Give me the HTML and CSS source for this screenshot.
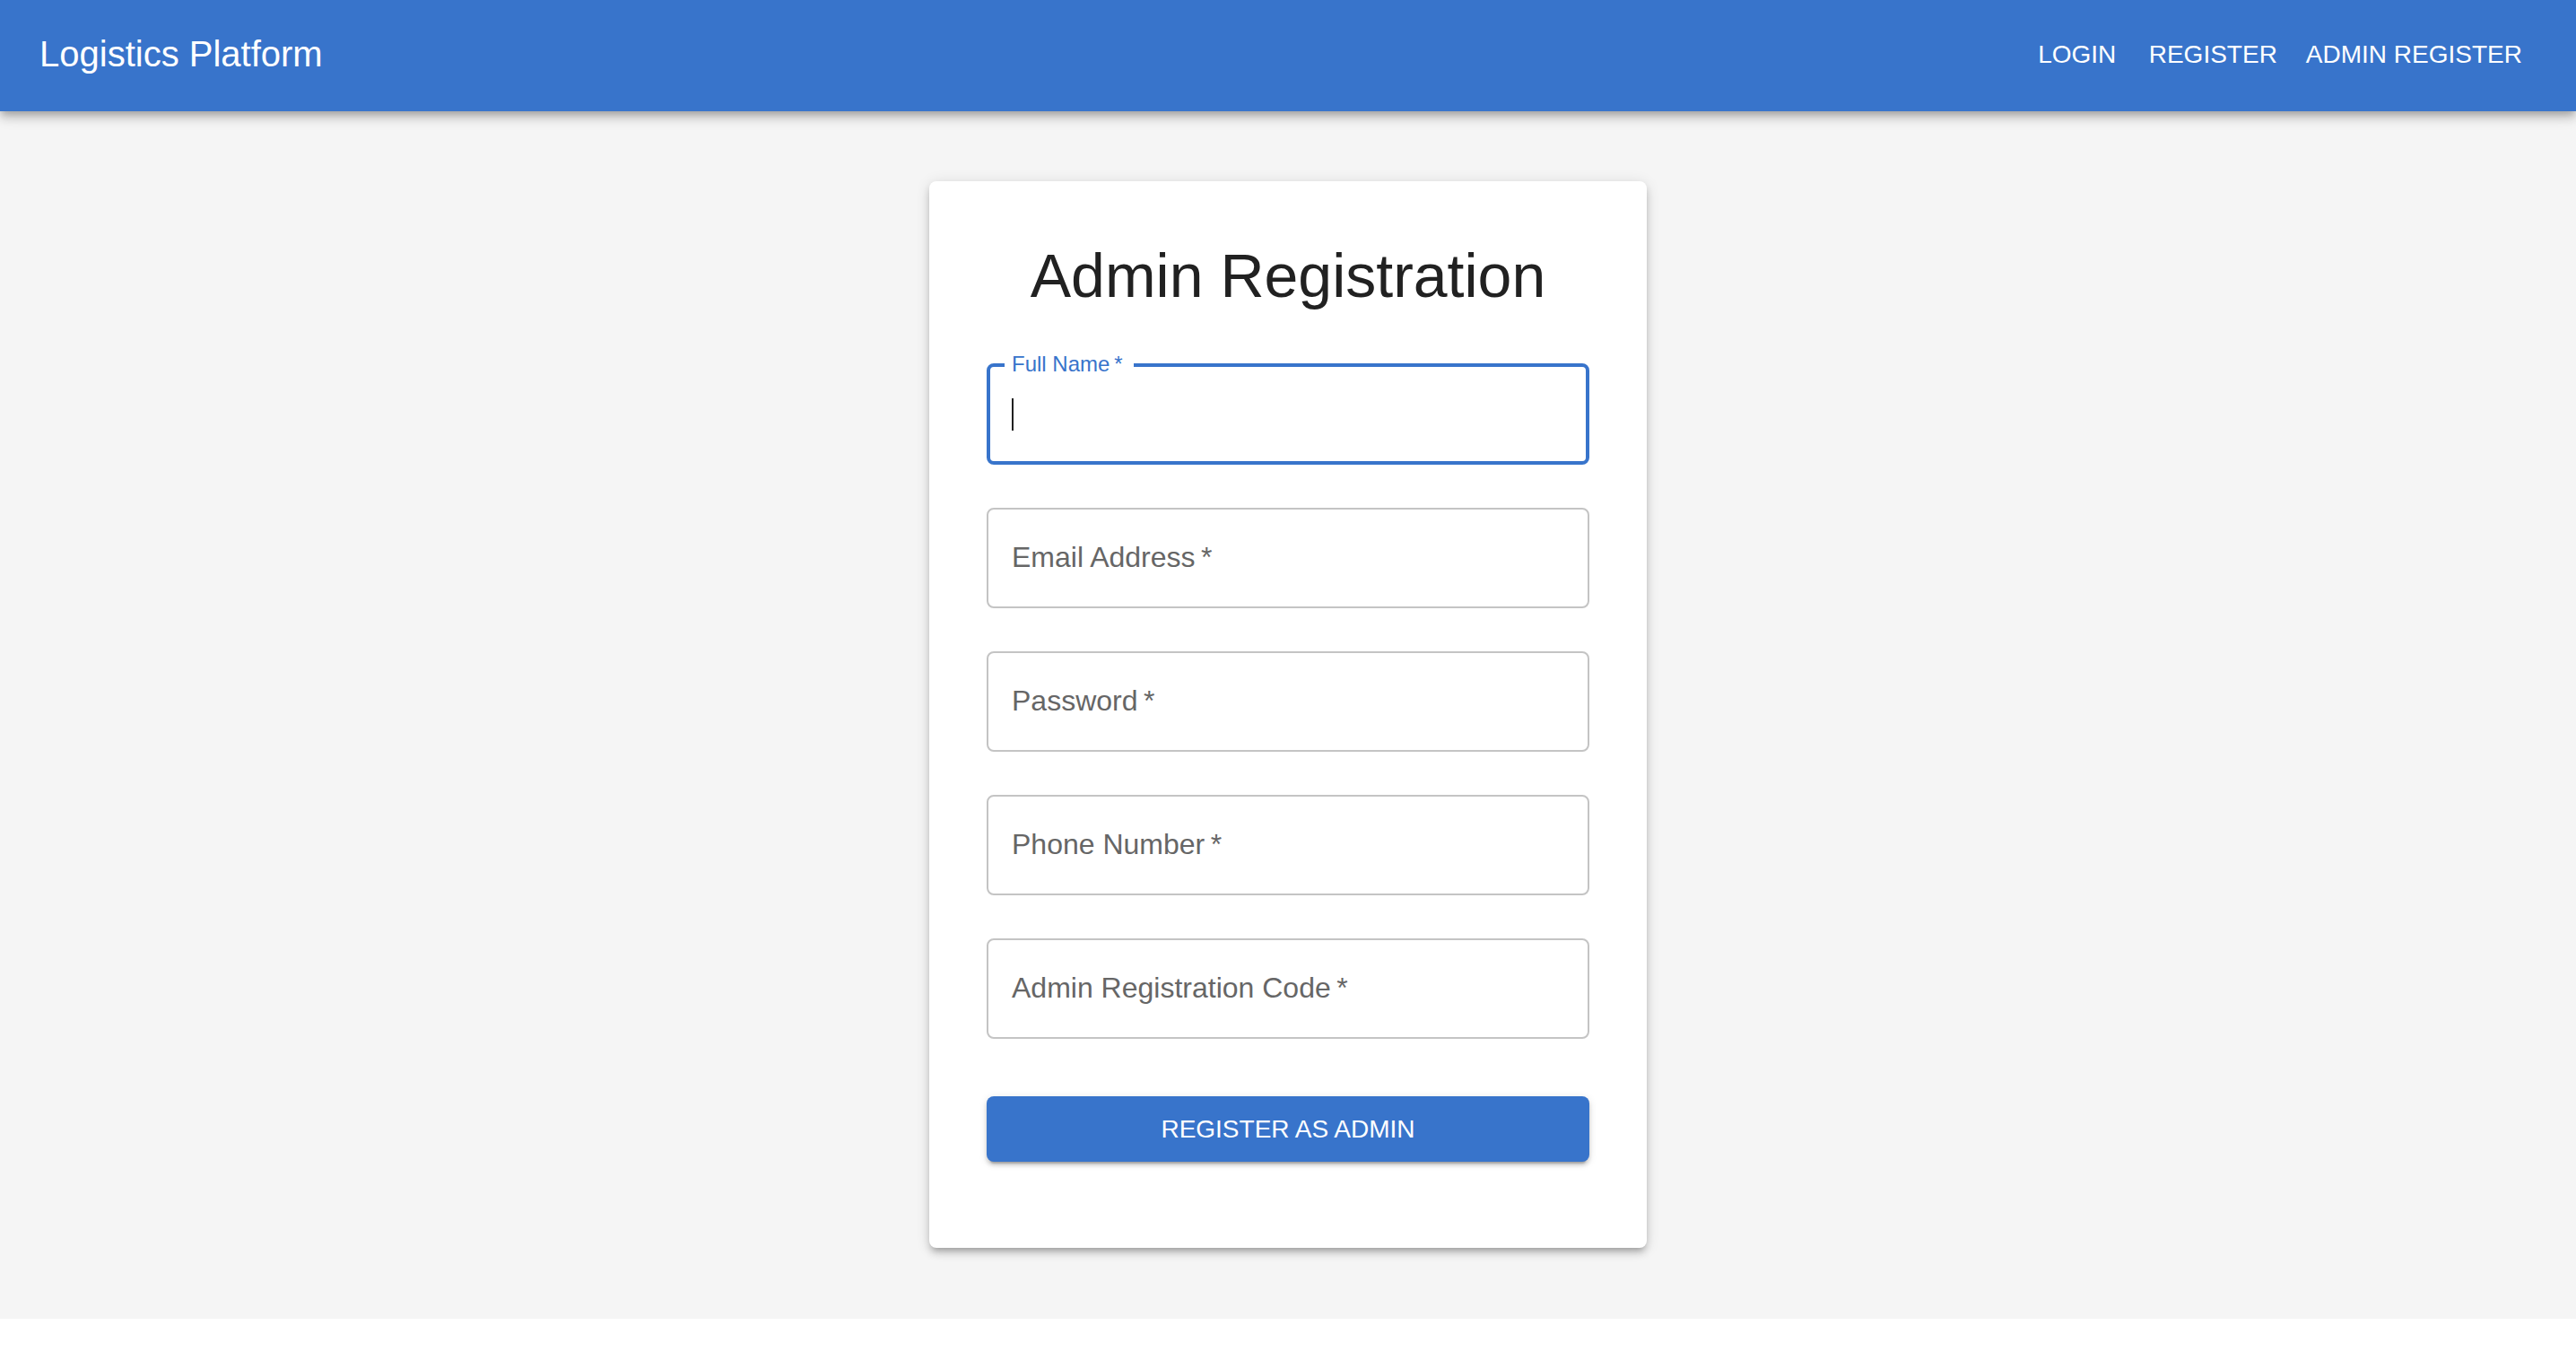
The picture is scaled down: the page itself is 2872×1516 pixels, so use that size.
FILE: index.html
```html
<!DOCTYPE html>
<html lang="en">
<head>
<meta charset="utf-8">
<meta name="viewport" content="width=device-width, initial-scale=1">
<title>Logistics Platform</title>
<link rel="stylesheet" href="styles.css">
</head>
<body>
<header class="app-bar">
  <div class="brand">Logistics Platform</div>
  <nav class="nav">
    <a class="nav-link" href="#login">LOGIN</a>
    <a class="nav-link" href="#register">REGISTER</a>
    <a class="nav-link" href="#admin-register">ADMIN REGISTER</a>
  </nav>
</header>
<main class="page">
  <section class="card">
    <h1 class="title">Admin Registration</h1>
    <form class="form">
      <div class="fields">
        <div class="field field-active">
          <input class="input" id="name" type="text" required>
          <label class="label" for="name">Full Name&thinsp;*</label>
          <span class="caret"></span>
        </div>
        <div class="field">
          <input class="input" id="email" type="email" required>
          <label class="label" for="email">Email Address&thinsp;*</label>
        </div>
        <div class="field">
          <input class="input" id="password" type="password" required>
          <label class="label" for="password">Password&thinsp;*</label>
        </div>
        <div class="field">
          <input class="input" id="phone" type="tel" required>
          <label class="label" for="phone">Phone Number&thinsp;*</label>
        </div>
        <div class="field">
          <input class="input" id="code" type="password" required>
          <label class="label" for="code">Admin Registration Code&thinsp;*</label>
        </div>
      </div>
      <button class="submit" type="submit">REGISTER AS ADMIN</button>
    </form>
  </section>
</main>
</body>
</html>
```
FILE: styles.css
```css
* {
  box-sizing: border-box;
}

body {
  margin: 0;
  background: #fff;
  color: #212121;
  font-family: "Liberation Sans", Arial, sans-serif;
}

.app-bar {
  position: relative;
  display: flex;
  align-items: center;
  justify-content: space-between;
  min-height: 124px;
  padding: 0 44px 4px;
  background: #3874cb;
  color: #fff;
  box-shadow: 0 4px 8px -2px rgba(0, 0, 0, .2), 0 8px 10px 0 rgba(0, 0, 0, .14), 0 2px 20px 0 rgba(0, 0, 0, .12);
}

.brand {
  font-size: 40px;
  line-height: 64px;
}

.nav {
  display: flex;
}

.nav-link {
  min-width: 128px;
  padding: 14px 16px 12px;
  color: inherit;
  font-size: 28px;
  line-height: 48px;
  text-align: center;
  text-decoration: none;
}

.page {
  padding: 78px 32px 79px;
  background: #f5f5f5;
}

.card {
  max-width: 800px;
  margin: 0 auto;
  padding: 64px 64px 96px;
  border-radius: 8px;
  background: #fff;
  box-shadow: 0 6px 6px -4px rgba(0, 0, 0, .2), 0 6px 8px 0 rgba(0, 0, 0, .14), 0 2px 16px 0 rgba(0, 0, 0, .12);
}

.title {
  margin: 0 0 57px;
  font-size: 68px;
  font-weight: 400;
  line-height: 82px;
  text-align: center;
}

.form {
  display: grid;
  gap: 64px;
}

.fields {
  display: grid;
  gap: 48px;
}

/* The input, its label and the caret share one grid cell. */
.field {
  display: grid;
  grid-template-columns: minmax(0, 1fr);
}

.input,
.label,
.caret {
  grid-area: 1 / 1;
}

.input {
  width: 100%;
  height: 112px;
  padding: 0 26px;
  border: 2px solid #c4c4c4;
  border-radius: 8px;
  outline: none;
  background: transparent;
  color: inherit;
  font: inherit;
  font-size: 32px;
}

.label {
  align-self: center;
  justify-self: start;
  margin-left: 28px;
  padding-bottom: 2px;
  color: #666;
  font-size: 32px;
  line-height: 48px;
  pointer-events: none;
}

.field-active .input {
  height: 113px;
  border: 4px solid #3874cb;
}

.field-active .label {
  align-self: start;
  margin: -15px 0 0 20px;
  padding: 0 12px 0 8px;
  background: #fff;
  color: #3874cb;
  font-size: 24px;
  line-height: 32px;
}

.caret {
  align-self: center;
  width: 2px;
  height: 36px;
  margin-left: 28px;
  background: #212121;
}

.submit {
  padding: 12px 32px;
  border: 0;
  border-radius: 8px;
  background: #3874cb;
  color: #fff;
  font: inherit;
  font-size: 28px;
  line-height: 49px;
  box-shadow: 0 6px 2px -4px rgba(0, 0, 0, .2), 0 4px 4px 0 rgba(0, 0, 0, .14), 0 2px 10px 0 rgba(0, 0, 0, .12);
}
```
